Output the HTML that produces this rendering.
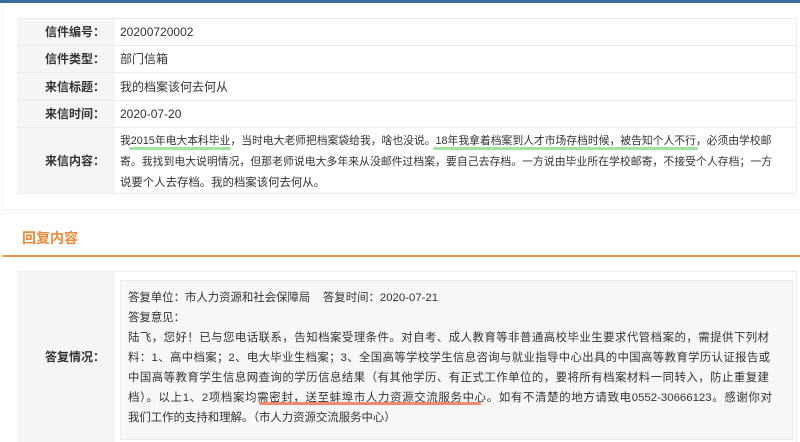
<!DOCTYPE html>
<html><head><meta charset="utf-8"><style>
*{margin:0;padding:0;box-sizing:border-box}
body{width:800px;height:437px;overflow:hidden;background:#fff;font-family:"Liberation Sans","Noto Sans CJK SC",sans-serif;font-size:12px;color:#333;position:relative}
.a{position:absolute}
.lab{position:absolute;left:17px;width:98px;background:#f5f5f5;text-align:right;padding-right:10px;font-weight:bold;color:#333;border-bottom:1px solid #ebebeb}
.val{position:absolute;left:115px;right:3px;padding-left:5px;border-bottom:1px solid #ebebeb;border-right:1px solid #ebebeb}
.l{position:absolute;white-space:nowrap;font-size:11.4px}
.c{font-size:10.8px}
.j{text-align:justify;text-align-last:justify}
.ug{position:absolute;height:3px;background:#9fe39f;border-radius:2px}
.uo{position:absolute;height:3px;background:#f08a6a;border-radius:2px}
</style></head><body>
<div class="a" style="left:0;top:0;width:800px;height:3px;background:#3f6aa0"></div>
<div class="a" style="left:2px;top:3px;width:796px;height:207px;border-bottom:1px solid #eee;border-left:1px solid #f3f3f3"></div>
<div class="a" style="left:17px;top:18px;width:780px;height:1px;background:#ebebeb"></div>
<div class="lab" style="top:19px;height:27px;line-height:27px">信件编号：</div><div class="val" style="top:19px;height:27px;line-height:27px">20200720002</div>
<div class="lab" style="top:46px;height:27px;line-height:27px">信件类型：</div><div class="val" style="top:46px;height:27px;line-height:27px">部门信箱</div>
<div class="lab" style="top:73px;height:28px;line-height:28px">来信标题：</div><div class="val" style="top:73px;height:28px;line-height:28px">我的档案该何去何从</div>
<div class="lab" style="top:101px;height:27px;line-height:27px">来信时间：</div><div class="val" style="top:101px;height:27px;line-height:27px">2020-07-20</div>
<div class="lab" style="top:128px;height:66px;line-height:66px">来信内容：</div><div class="val" style="top:128px;height:66px"></div>
<div class="l c j" style="left:120px;top:131px;width:650px;line-height:21px">我2015年电大本科毕业，当时电大老师把档案袋给我，啥也没说。18年我拿着档案到人才市场存档时候，被告知个人不行，必须由学校邮</div>
<div class="l c j" style="left:120px;top:152px;width:652px;line-height:21px">寄。我找到电大说明情况，但那老师说电大多年来从没邮件过档案，要自己去存档。一方说由毕业所在学校邮寄，不接受个人存档；一方</div>
<div class="l" style="left:120px;top:173px;line-height:21px">说要个人去存档。我的档案该何去何从。</div>
<div class="ug" style="left:129px;top:147px;width:102px"></div>
<div class="ug" style="left:433px;top:147px;width:265px"></div>
<div class="a" style="left:22px;top:228px;font-size:14px;font-weight:bold;color:#f0883a">回复内容</div>
<div class="a" style="left:2px;top:255px;width:798px;height:2px;background:#e8954e"></div>
<div class="a" style="left:17px;top:271px;width:780px;height:1px;background:#ebebeb"></div>
<div class="lab" style="top:272px;height:170px;line-height:170px;border-bottom:0">答复情况：</div>
<div class="val" style="top:272px;height:170px;border-bottom:0"></div>
<div class="a" style="left:120px;top:280px;width:673px;height:160px;background:#f7f7f7;border:1px solid #ececec"></div>
<div class="l" style="left:128px;top:288px;line-height:20px">答复单位：市人力资源和社会保障局&nbsp;&nbsp;&nbsp;&nbsp;答复时间：2020-07-21</div>
<div class="l" style="left:128px;top:308px;line-height:20px">答复意见：</div>
<div class="l j" style="left:128px;top:328px;width:641px;line-height:20px">陆飞，您好！已与您电话联系，告知档案受理条件。对自考、成人教育等非普通高校毕业生要求代管档案的，需提供下列材</div>
<div class="l j" style="left:128px;top:348px;width:642px;line-height:20px">料：1、高中档案；2、电大毕业生档案；3、全国高等学校学生信息咨询与就业指导中心出具的中国高等教育学历认证报告或</div>
<div class="l j" style="left:128px;top:368px;width:641px;line-height:20px">中国高等教育学生信息网查询的学历信息结果（有其他学历、有正式工作单位的，要将所有档案材料一同转入，防止重复建</div>
<div class="l j" style="left:128px;top:388px;width:644px;line-height:20px">档）。以上1、2项档案均需密封，送至蚌埠市人力资源交流服务中心。如有不清楚的地方请致电0552-30666123。感谢你对</div>
<div class="l" style="left:128px;top:408px;line-height:20px">我们工作的支持和理解。（市人力资源交流服务中心）</div>
<div class="uo" style="left:259px;top:402px;width:222px"></div>
</body></html>
